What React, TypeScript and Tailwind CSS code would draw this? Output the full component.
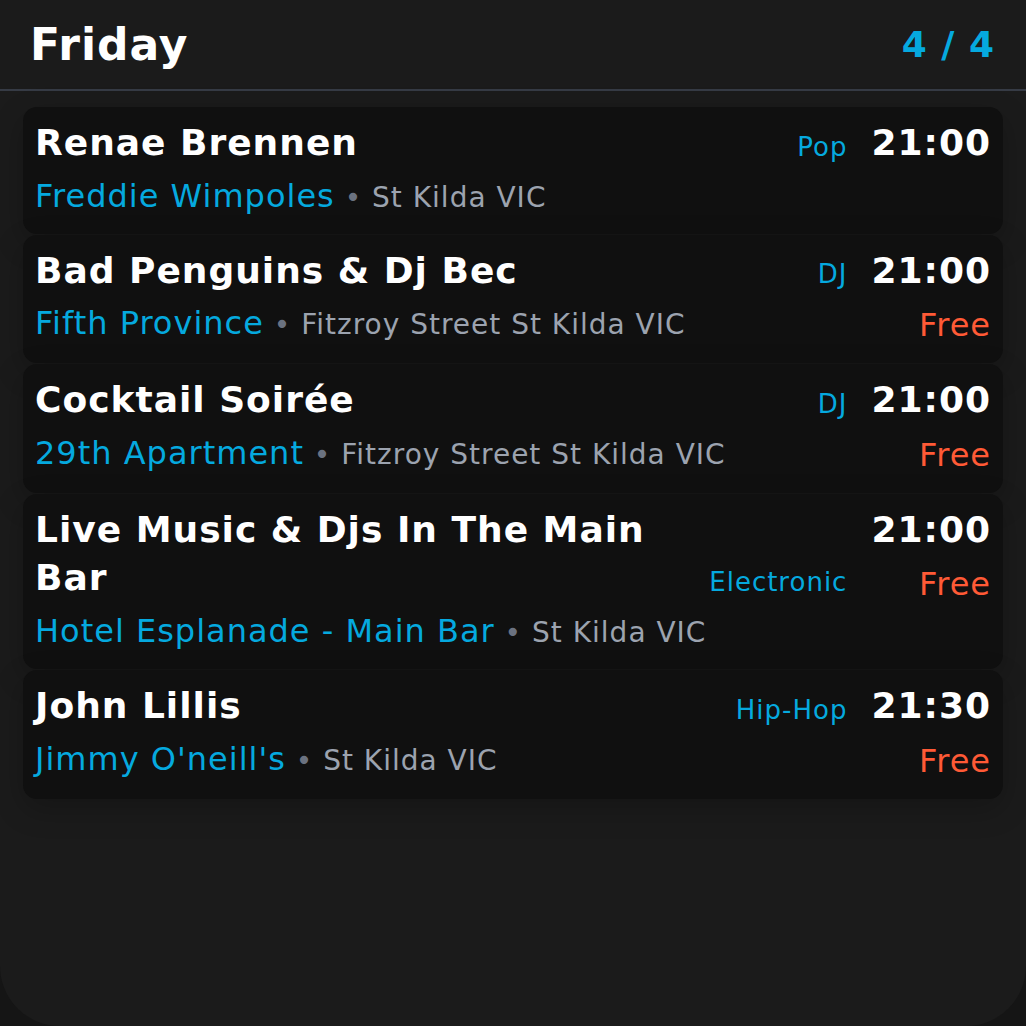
import React from 'react';

interface Gig {
  title: string;
  genre: string;
  time: string;
  free: boolean;
  venue: string;
  place: string;
}

const gigs: Gig[] = [
  { title: 'Renae Brennen', genre: 'Pop', time: '21:00', free: false, venue: 'Freddie Wimpoles', place: 'St Kilda VIC' },
  { title: 'Bad Penguins & Dj Bec', genre: 'DJ', time: '21:00', free: true, venue: 'Fifth Province', place: 'Fitzroy Street St Kilda VIC' },
  { title: 'Cocktail Soirée', genre: 'DJ', time: '21:00', free: true, venue: '29th Apartment', place: 'Fitzroy Street St Kilda VIC' },
  { title: 'Live Music & Djs In The Main Bar', genre: 'Electronic', time: '21:00', free: true, venue: 'Hotel Esplanade - Main Bar', place: 'St Kilda VIC' },
  { title: 'John Lillis', genre: 'Hip-Hop', time: '21:30', free: true, venue: "Jimmy O'neill's", place: 'St Kilda VIC' },
];

const GigCard: React.FC<{ gig: Gig }> = ({ gig }) => {
  return <div className="flex rounded-[14px] bg-[#101010] px-3 pt-3 pb-4 shadow-[0_10px_30px_rgba(0,0,0,0.22)]">
      {/* left: title + genre, then venue */}
      <div className="flex-1 min-w-0">
        <div className="flex items-end">
          <div className="flex-1 text-[36px] font-bold leading-[1.35] text-white">{gig.title}</div>
          <div className="ml-4 mb-[1px] shrink-0 text-[26px] leading-normal text-[#05a9df]">{gig.genre}</div>
        </div>
        <div className="mt-[6px] text-[32px] leading-snug whitespace-nowrap">
          <span className="text-[#05a9df]">{gig.venue}</span>
          <span className="text-[28px] text-[#9ca3af]"> <span className="text-[#6b7280]">•</span> {gig.place}</span>
        </div>
      </div>
      {/* right: time + price */}
      <div className="ml-6 shrink-0 text-right">
        <div className="text-[36px] font-bold leading-[1.35] text-white">{gig.time}</div>
        {gig.free && <div className="mt-[8px] text-[32px] leading-snug text-[#ff5a36]">Free</div>}
      </div>
    </div>;
};

export default function App() {
  return <div className="min-h-[1026px] bg-[#151515] tracking-[1px]" style={{ fontFamily: '"DejaVu Sans", sans-serif' }}>
      <div className="h-[1026px] rounded-b-[60px] bg-[#1b1b1b]">
        <header className="flex h-[91px] items-center justify-between border-b-2 border-[#363b45] pl-[30px] pr-[31px]">
          <h1 className="text-[44px] font-bold leading-normal text-white">Friday</h1>
          <span className="text-[36px] font-bold leading-normal text-[#05a9df]">4 / 4</span>
        </header>
        <div className="flex flex-col gap-px px-[23px] pt-4">
          {gigs.map(gig => <GigCard key={gig.title} gig={gig} />)}
        </div>
      </div>
    </div>;
}
